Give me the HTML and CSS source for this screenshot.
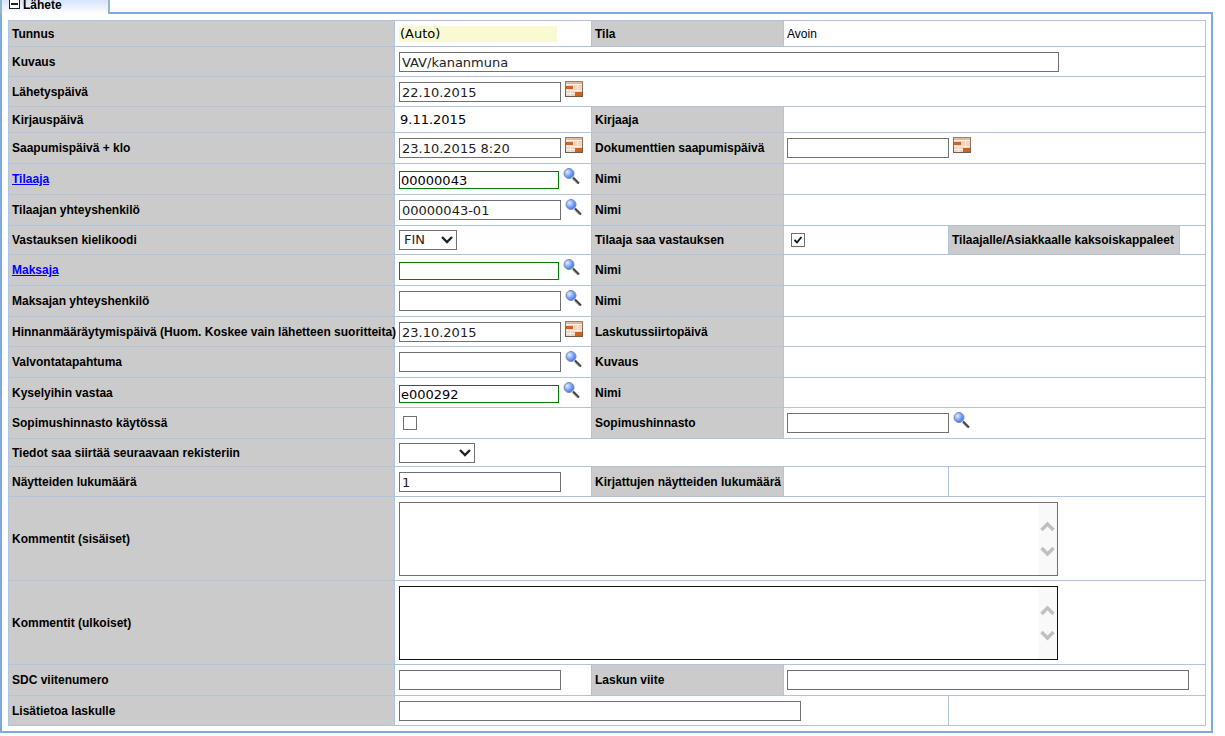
FILE: index.html
```html
<!DOCTYPE html>
<html lang="fi">
<head>
<meta charset="utf-8">
<title>Lähete</title>
<link rel="stylesheet" href="styles.css">
</head>
<body>
<svg class="sprites" aria-hidden="true">
  <defs>
    <linearGradient id="frame" x1="0" y1="0" x2="0" y2="1">
      <stop offset="0" stop-color="#98806e"/><stop offset="1" stop-color="#70584a"/>
    </linearGradient>
    <radialGradient id="lens" cx=".35" cy=".35" r=".7">
      <stop offset="0" stop-color="#e4eeff"/><stop offset=".5" stop-color="#84aaf8"/><stop offset="1" stop-color="#3c70e4"/>
    </radialGradient>
    <symbol id="calendar" viewBox="0 0 18 16">
      <rect width="18" height="16" fill="url(#frame)"/>
      <rect x="1" y="1" width="16" height="14" fill="#f6d4be"/>
      <path d="M1 1h16v2H1z" fill="#e0b89e"/>
      <path d="M1 3h16v1H1z" fill="#fff3ea"/>
      <path d="M1 9.500h16M1 12.500h9M12.500 4v7M5.500 9v6" stroke="#fff" stroke-opacity=".6" fill="none"/>
      <path d="M1 5h7v3H1zM10 11h7v4h-7z" fill="#d2631d"/>
    </symbol>
    <symbol id="search" viewBox="0 0 18 16">
      <path d="M10 10l5.500 5.500" stroke="#b8b8b8" stroke-width="3"/>
      <path d="M10 9.500l6 6" stroke="#444" stroke-width="1.800"/>
      <circle cx="6" cy="5.500" r="5" fill="url(#lens)" stroke="#7c8cb4"/>
    </symbol>
  </defs>
</svg>
<main class="panel">
  <header class="tabs">
    <div class="tab">
      <button class="toggle" type="button" aria-label="Pienennä"></button>
      <span>Lähete</span>
    </div>
    <div class="tabs-rest"></div>
  </header>
  <form class="panel-body">
    <table class="grid">
      <colgroup>
        <col class="c-label"><col class="c-value"><col class="c-label2"><col class="c-value2"><col class="c-extra"><col>
      </colgroup>
      <tbody>
      <tr class="low">
        <th>Tunnus</th><td><div class="auto">(Auto)</div></td>
        <th>Tila</th><td colspan="3">Avoin</td>
      </tr>
      <tr>
        <th><label for="kuvaus">Kuvaus</label></th>
        <td colspan="5"><div class="field"><input id="kuvaus" class="text long" type="text" value="VAV/kananmuna"></div></td>
      </tr>
      <tr>
        <th><label for="lahetys">Lähetyspäivä</label></th>
        <td colspan="5"><div class="field"><input id="lahetys" class="text" type="text" value="22.10.2015"><button class="icon" type="button" aria-label="Kalenteri"><svg><use href="#calendar"/></svg></button></div></td>
      </tr>
      <tr class="low">
        <th>Kirjauspäivä</th><td><div class="value">9.11.2015</div></td>
        <th>Kirjaaja</th><td colspan="3"></td>
      </tr>
      <tr class="tall">
        <th><label for="saapumis">Saapumispäivä + klo</label></th>
        <td><div class="field"><input id="saapumis" class="text" type="text" value="23.10.2015 8:20"><button class="icon" type="button" aria-label="Kalenteri"><svg><use href="#calendar"/></svg></button></div></td>
        <th><label for="dok">Dokumenttien saapumispäivä</label></th>
        <td colspan="3"><div class="field"><input id="dok" class="text" type="text"><button class="icon" type="button" aria-label="Kalenteri"><svg><use href="#calendar"/></svg></button></div></td>
      </tr>
      <tr class="tall">
        <th><a href="#" id="l-tilaaja">Tilaaja</a></th>
        <td><div class="field required"><input class="text" type="text" value="00000043" aria-labelledby="l-tilaaja"><button class="icon" type="button" aria-label="Hae"><svg><use href="#search"/></svg></button></div></td>
        <th>Nimi</th><td colspan="3"></td>
      </tr>
      <tr class="tall">
        <th><label for="tyht">Tilaajan yhteyshenkilö</label></th>
        <td><div class="field"><input id="tyht" class="text" type="text" value="00000043-01"><button class="icon" type="button" aria-label="Hae"><svg><use href="#search"/></svg></button></div></td>
        <th>Nimi</th><td colspan="3"></td>
      </tr>
      <tr class="medium">
        <th><label for="kieli">Vastauksen kielikoodi</label></th>
        <td><div class="field"><select id="kieli" class="select"><option>FIN</option></select></div></td>
        <th><label for="saa">Tilaaja saa vastauksen</label></th>
        <td><div class="field"><input id="saa" class="check" type="checkbox" checked></div></td>
        <th>Tilaajalle/Asiakkaalle kaksoiskappaleet</th><td></td>
      </tr>
      <tr class="tall">
        <th><a href="#" id="l-maksaja">Maksaja</a></th>
        <td><div class="field required"><input class="text" type="text" aria-labelledby="l-maksaja"><button class="icon" type="button" aria-label="Hae"><svg><use href="#search"/></svg></button></div></td>
        <th>Nimi</th><td colspan="3"></td>
      </tr>
      <tr class="tall">
        <th><label for="myht">Maksajan yhteyshenkilö</label></th>
        <td><div class="field"><input id="myht" class="text" type="text"><button class="icon" type="button" aria-label="Hae"><svg><use href="#search"/></svg></button></div></td>
        <th>Nimi</th><td colspan="3"></td>
      </tr>
      <tr>
        <th><label for="hinta">Hinnanmääräytymispäivä (Huom. Koskee vain lähetteen suoritteita)</label></th>
        <td><div class="field"><input id="hinta" class="text" type="text" value="23.10.2015"><button class="icon" type="button" aria-label="Kalenteri"><svg><use href="#calendar"/></svg></button></div></td>
        <th>Laskutussiirtopäivä</th><td colspan="3"></td>
      </tr>
      <tr class="tall">
        <th><label for="valv">Valvontatapahtuma</label></th>
        <td><div class="field"><input id="valv" class="text" type="text"><button class="icon" type="button" aria-label="Hae"><svg><use href="#search"/></svg></button></div></td>
        <th>Kuvaus</th><td colspan="3"></td>
      </tr>
      <tr>
        <th><label for="kysely">Kyselyihin vastaa</label></th>
        <td><div class="field required"><input id="kysely" class="text" type="text" value="e000292"><button class="icon" type="button" aria-label="Hae"><svg><use href="#search"/></svg></button></div></td>
        <th>Nimi</th><td colspan="3"></td>
      </tr>
      <tr class="tall">
        <th><label for="kaytossa">Sopimushinnasto käytössä</label></th>
        <td><div class="field"><input id="kaytossa" class="check" type="checkbox"></div></td>
        <th><label for="sopimus">Sopimushinnasto</label></th>
        <td colspan="3"><div class="field"><input id="sopimus" class="text" type="text"><button class="icon" type="button" aria-label="Hae"><svg><use href="#search"/></svg></button></div></td>
      </tr>
      <tr class="short">
        <th><label for="siirto">Tiedot saa siirtää seuraavaan rekisteriin</label></th>
        <td colspan="5"><div class="field"><select id="siirto" class="select wide"><option></option></select></div></td>
      </tr>
      <tr>
        <th><label for="lkm">Näytteiden lukumäärä</label></th>
        <td><div class="field"><input id="lkm" class="text" type="text" value="1"></div></td>
        <th>Kirjattujen näytteiden lukumäärä</th><td></td><td colspan="2"></td>
      </tr>
      <tr class="area">
        <th><label for="sis">Kommentit (sisäiset)</label></th>
        <td colspan="5"><textarea id="sis" class="comment"></textarea></td>
      </tr>
      <tr class="area">
        <th><label for="ulk">Kommentit (ulkoiset)</label></th>
        <td colspan="5"><textarea id="ulk" class="comment active"></textarea></td>
      </tr>
      <tr class="tall">
        <th><label for="sdc">SDC viitenumero</label></th>
        <td><div class="field"><input id="sdc" class="text" type="text"></div></td>
        <th><label for="viite">Laskun viite</label></th>
        <td colspan="3"><div class="field"><input id="viite" class="text mid" type="text"></div></td>
      </tr>
      <tr>
        <th><label for="lisa">Lisätietoa laskulle</label></th>
        <td colspan="3"><div class="field"><input id="lisa" class="text mid" type="text"></div></td>
        <td colspan="2"></td>
      </tr>
      </tbody>
    </table>
  </form>
</main>
</body>
</html>
```

FILE: styles.css
```css
* { box-sizing: border-box; }

body {
  margin: 0 12px 0 0;
  background: #fff;
  color: #000;
  font: 12px/14px "Liberation Sans", Arial, sans-serif;
}

.sprites { position: absolute; width: 0; height: 0; }

/* Panel and tab strip */
.tabs { display: flex; height: 14px; }

.tab {
  display: flex;
  align-items: flex-start;
  gap: 3px;
  width: 110px;
  padding-left: 7px;
  border: solid #90b4d4;
  border-width: 0 2px;
  background: linear-gradient(#d6e5fb, #fff);
  font-weight: bold;
  line-height: 10px;
}

.toggle {
  width: 11px;
  height: 9px;
  padding: 0;
  border: 1px solid #222;
  border-top-width: 0;
  background: linear-gradient(#222, #222) center 3px / 7px 2px no-repeat #fff;
}

.tabs-rest { flex: 1; border-bottom: 2px solid #80a8e0; }

.panel-body {
  padding: 6px 5px 5px 6px;
  border: 2px solid #80a8e0;
  border-top: 0;
}

/* Form grid */
.grid {
  width: 100%;
  table-layout: fixed;
  border-collapse: collapse;
}

.c-label { width: 386px; }
.c-value { width: 197px; }
.c-label2 { width: 192px; }
.c-value2 { width: 165px; }
.c-extra { width: 231px; }

.grid tr { height: 30px; }
.grid .low { height: 26px; }
.grid .short { height: 28px; }
.grid .medium { height: 29px; }
.grid .tall { height: 31px; }
.grid .area { height: 84px; }

.grid th,
.grid td {
  padding: 0 0 0 3px;
  border: 1px solid #b0c4de;
  text-align: left;
  vertical-align: middle;
}

.grid th {
  background: #cbcbcb;
  white-space: nowrap;
}

.grid th:first-child + td { padding-left: 4px; }
.grid a { color: #00f; }

/* Controls */
.auto,
.value,
.text,
.select {
  font: 13px/16px "DejaVu Sans", Verdana, sans-serif;
}

.auto,
.value { width: 158px; padding-left: 1px; }
.auto { background: #fafad2; }

.field { display: flex; align-items: flex-start; gap: 4px; }

.text {
  width: 162px;
  height: 20px;
  padding: 1px 2px 0;
  border: 1px solid #707070;
  background: #fff;
  color: #222;
}

.text.mid { width: 402px; }
.text.long { width: 660px; }

.required .text {
  width: 160px;
  height: 18px;
  margin-top: 2px;
  padding: 1px 1px 0;
  border-color: #008000;
  color: #000;
}

.icon {
  width: 18px;
  height: 16px;
  margin-top: -1px;
  padding: 0;
  border: 0;
  background: none;
}

.icon svg { display: block; width: 18px; height: 16px; }

.select {
  appearance: none;
  width: 58px;
  height: 20px;
  padding: 0 4px;
  border: 1px solid #707070;
  border-radius: 0;
  background: #fff url("data:image/svg+xml,%3Csvg xmlns='http://www.w3.org/2000/svg' width='12' height='8'%3E%3Cpath d='M1 1l5 5 5-5' fill='none' stroke='%23222' stroke-width='2.400'/%3E%3C/svg%3E") right 3px center no-repeat;
  color: #222;
}

.select.wide { width: 76px; }

.check {
  appearance: none;
  width: 14px;
  height: 14px;
  margin: 0 4px;
  border: 1px solid #707070;
  background: #fff;
}

.check:checked {
  background: #fff url("data:image/svg+xml,%3Csvg xmlns='http://www.w3.org/2000/svg' width='10' height='8'%3E%3Cpath d='M1.500 4l2.500 2.500L8.500 1' fill='none' stroke='%23111' stroke-width='1.800'/%3E%3C/svg%3E") center no-repeat;
}

.comment {
  display: block;
  width: 659px;
  height: 74px;
  padding: 2px 20px 2px 2px;
  border: 1px solid #707070;
  background:
    url("data:image/svg+xml,%3Csvg xmlns='http://www.w3.org/2000/svg' width='19' height='38'%3E%3Cpath d='M3.500 10l6-6 6 6M3.500 28l6 6 6-6' fill='none' stroke='%23c0c0c0' stroke-width='3.500'/%3E%3C/svg%3E") right center no-repeat,
    linear-gradient(#f9f9f9, #f9f9f9) right / 19px 100% no-repeat,
    #fff;
  font: 13px/16px "DejaVu Sans", Verdana, sans-serif;
  resize: none;
}

.comment.active { border-color: #111; }
```
